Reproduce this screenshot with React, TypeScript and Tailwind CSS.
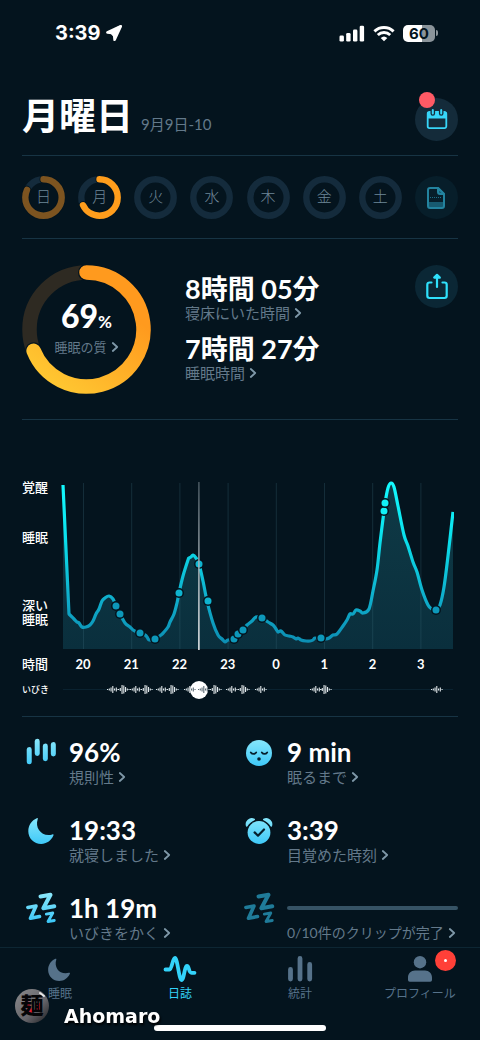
import React, { useState } from 'react';

type Point = [number, number];

const BG = '#04141e';

// Sleep depth over the night
const curve: Point[] = [
  [4, 5], [10, 134], [12, 136], [15, 139], [18, 142], [20, 143], [23, 147], [27, 147], [31, 145], [34, 141],
  [37, 134], [40, 129], [43, 121], [46, 118], [50, 116], [54, 119], [57, 126], [61, 134], [66, 143],
  [71, 147], [74, 150], [80, 153], [86, 155], [88, 157], [90, 160], [93, 160], [96, 159], [102, 155],
  [105, 152], [109, 147], [111, 142], [115, 134], [118, 123], [120, 113], [124, 96], [129, 80], [130, 78],
  [132, 77], [134, 75], [137, 78], [140, 84], [144, 101], [148, 121], [154, 143], [159, 155], [163, 159],
  [166, 162], [169, 160], [175, 159], [179, 153], [184, 150], [188, 145], [193, 141], [197, 137],
  [203, 138], [209, 142], [214, 145], [217, 149], [219, 152], [222, 151], [226, 155], [230, 156], [234, 157], [237, 159],
  [239, 158], [242, 160], [247, 161], [251, 161], [254, 160], [256, 158], [262, 159], [267, 159], [270, 158], [274, 155],
  [278, 154], [284, 146], [288, 140], [291, 134], [294, 134], [297, 130], [301, 131], [304, 133],
  [310, 129], [314, 111], [318, 90], [321, 63], [325, 31], [326, 23], [329, 8], [332, 3], [335, 7],
  [339, 26], [345, 55], [349, 66], [354, 82], [358, 92], [363, 110], [369, 125], [373, 129], [377, 130],
  [381, 125], [385, 107], [389, 76], [394, 32],
];

const dots: Point[] = [
  [57, 126], [61, 134], [81, 153], [96, 159], [120, 113], [140, 84], [149, 121],
  [175, 159], [179, 154], [184, 150], [203, 138], [262, 158], [325, 31], [326, 23], [377, 130],
];

const hours = ['20', '21', '22', '23', '0', '1', '2', '3'];

const smallBurst = [1, 2, 4, 7, 2, 4, 1];
const largeBurst = [1, 3, 9, 8, 5, 2, 1];
const snores: { x: number; bars: number[] }[] = [
  { x: 48, bars: smallBurst },
  { x: 59, bars: largeBurst },
  { x: 71, bars: smallBurst },
  { x: 82, bars: largeBurst },
  { x: 97, bars: smallBurst },
  { x: 108, bars: largeBurst },
  { x: 125, bars: smallBurst },
  { x: 139, bars: smallBurst },
  { x: 151, bars: largeBurst },
  { x: 167, bars: smallBurst },
  { x: 179, bars: largeBurst },
  { x: 196, bars: smallBurst },
  { x: 251, bars: smallBurst },
  { x: 261, bars: largeBurst },
  { x: 372, bars: smallBurst },
];

const days = [
  { label: '日', value: 82, color: '#7d5420' },
  { label: '月', value: 68, color: '#ff9d1c' },
  { label: '火', value: 0, color: '' },
  { label: '水', value: 0, color: '' },
  { label: '木', value: 0, color: '' },
  { label: '金', value: 0, color: '' },
  { label: '土', value: 0, color: '' },
];

function smoothPath(points: Point[]) {
  let d = `M${points[0][0]} ${points[0][1]}`;
  for (let i = 0; i < points.length - 1; i++) {
    const p0 = points[i - 1] ?? points[i];
    const p1 = points[i];
    const p2 = points[i + 1];
    const p3 = points[i + 2] ?? p2;
    // long straight drop at the start should not overshoot
    const k = i < 2 ? 0 : 1 / 6;
    d += `C${p1[0] + (p2[0] - p0[0]) * k} ${p1[1] + (p2[1] - p0[1]) * k} ${p2[0] - (p3[0] - p1[0]) * k} ${p2[1] - (p3[1] - p1[1]) * k} ${p2[0]} ${p2[1]}`;
  }
  return d;
}

function Chevron() {
  return (
    <svg viewBox="0 0 8 12" className="h-3 w-2 shrink-0" fill="none" stroke="#7f98a8" strokeWidth="1.8" strokeLinecap="round" strokeLinejoin="round">
      <path d="M1.8 2 6.2 6 1.8 10" />
    </svg>
  );
}

function LinkLabel({ children, className = 'text-[15px]' }: { children: React.ReactNode; className?: string }) {
  return (
    <button className={`flex items-center gap-1 whitespace-nowrap leading-[18px] text-[#63798a] ${className}`}>
      <span>{children}</span>
      <Chevron />
    </button>
  );
}

function StatusBar() {
  return (
    <div className="flex h-[66px] items-center justify-between pl-[55px] pr-[42px]">
      <div className="flex items-center gap-1 font-['Inter',sans-serif] text-[20px] font-bold">
        <span>3:39</span>
        <svg viewBox="0 0 18 18" className="size-[18px]" fill="#fff" stroke="#fff" strokeWidth="2.6" strokeLinejoin="round">
          <path d="M15.8 2.2 2.4 8.4 9 9.2 9.6 15.8Z" />
          <path d="M15 3 6 8.2 9.8 12.500Z" />
        </svg>
      </div>
      <div className="flex items-center gap-2">
        <svg viewBox="0 0 26 17" className="h-[17px] w-[26px]" fill="#fff">
          <rect x="0.5" y="10.5" width="4.4" height="6" rx="1.3" />
          <rect x="7.2" y="8" width="4.4" height="8.5" rx="1.3" />
          <rect x="14" y="4.6" width="4.4" height="11.9" rx="1.3" />
          <rect x="20.7" y="0.8" width="4.4" height="15.7" rx="1.3" />
        </svg>
        <svg viewBox="0 0 22 17" className="h-[17px] w-[22px]" fill="none" stroke="#fff" strokeWidth="2.9">
          <path d="M1.4 6.4a13.8 13.8 0 0 1 19.2 0" />
          <path d="M4.8 10a9 9 0 0 1 12.4 0" />
          <path d="M11 16.3 7.7 13a4.8 4.8 0 0 1 6.6 0Z" fill="#fff" stroke="none" />
        </svg>
        <div className="flex items-center">
          <div className="flex h-[17px] w-8 items-center justify-center rounded-[5px] bg-linear-to-r from-white from-60% to-[#8b949a] to-60% font-['Inter',sans-serif] text-[15px] leading-none font-bold text-[#04141e]">
            60
          </div>
          <div className="ml-px h-[6px] w-[2px] rounded-r-full bg-[#8b949a]" />
        </div>
      </div>
    </div>
  );
}

function DayRing({ label, value, color }: { label: string; value: number; color: string }) {
  return (
    <button className="grid size-[43px] place-items-center">
      <svg viewBox="0 0 43 43" className="col-start-1 row-start-1 size-full -rotate-90" fill="none">
        <circle cx="21.5" cy="21.5" r="18.2" stroke="#142b3c" strokeWidth="6.4" />
        {value > 0 && (
          <>
            <circle cx="21.5" cy="21.5" r="18.2" pathLength="100" stroke={BG} strokeWidth="8" strokeLinecap="round" strokeDasharray={`${value} 100`} />
            <circle cx="21.5" cy="21.5" r="18.2" pathLength="100" stroke={color} strokeWidth="6.4" strokeLinecap="round" strokeDasharray={`${value} 100`} />
          </>
        )}
      </svg>
      <span className="col-start-1 row-start-1 pb-1 text-[15px] leading-5 font-light text-[#6f8798]">{label}</span>
    </button>
  );
}

function ScoreRing() {
  return (
    <div className="grid size-[129px] shrink-0 place-items-center">
      <svg viewBox="0 0 129 129" className="col-start-1 row-start-1 size-full" fill="none">
        <defs>
          <linearGradient id="score" x1="100" y1="10" x2="20" y2="115" gradientUnits="userSpaceOnUse">
            <stop offset="0.2" stopColor="#ff9a1e" />
            <stop offset="1" stopColor="#ffc832" />
          </linearGradient>
        </defs>
        <circle cx="64.5" cy="64.5" r="57" stroke="#2e2a22" strokeWidth="14.5" />
        <path d="M64.5 7.5A57 57 0 1 1 11.6 85.8" stroke={BG} strokeWidth="17" strokeLinecap="round" />
        <path d="M64.5 7.5A57 57 0 1 1 11.6 85.8" stroke="url(#score)" strokeWidth="14.5" strokeLinecap="round" />
      </svg>
      <div className="col-start-1 row-start-1 flex flex-col items-center pb-1">
        <p className="text-[32px] leading-8 font-black">
          69<span className="text-[17px] font-bold">%</span>
        </p>
        <LinkLabel className="text-[13px]">睡眠の質</LinkLabel>
      </div>
    </div>
  );
}

function SleepChart() {
  const line = smoothPath(curve);
  return (
    <svg viewBox="0 0 395 170" className="w-full" role="img" fill="none">
      <defs>
        <linearGradient id="depth" x1="0" y1="0" x2="0" y2="165" gradientUnits="userSpaceOnUse">
          <stop offset="0" stopColor="#14fbff" />
          <stop offset="0.35" stopColor="#0ae0ec" />
          <stop offset="0.7" stopColor="#0fb0cd" />
          <stop offset="1" stopColor="#0c8db2" />
        </linearGradient>
        <linearGradient id="area" x1="0" y1="0" x2="0" y2="1">
          <stop offset="0" stopColor="#0f3a46" />
          <stop offset="1" stopColor="#0a2f3d" />
        </linearGradient>
        <linearGradient id="cursor" x1="0" y1="0" x2="0" y2="170" gradientUnits="userSpaceOnUse">
          <stop offset="0" stopColor="#4a5962" />
          <stop offset="0.5" stopColor="#a9b3b9" />
          <stop offset="1" stopColor="#ffffff" />
        </linearGradient>
      </defs>
      <path d={`${line}V169H4Z`} fill="url(#area)" />
      {hours.map((hour, i) => (
        <path key={hour} d={`M${24.5 + i * 48.2} 3V169`} stroke="#3c6a7c" strokeOpacity="0.3" />
      ))}
      <path d={line} stroke="url(#depth)" strokeWidth="3.2" strokeLinejoin="round" />
      {dots.map(([x, y]) => (
        <g key={`${x}-${y}`}>
          <circle cx={x} cy={y} r="5" fill={BG} />
          <circle cx={x} cy={y} r="3.5" fill={y < 40 ? '#12f0f6' : y < 125 ? '#0fb4cf' : '#0d98ba'} />
        </g>
      ))}
      <path d="M139.2 2h1.4V170h-1.4Z" fill="url(#cursor)" />
    </svg>
  );
}

function SnoreTrack() {
  const [position, setPosition] = useState(347);
  return (
    <div className="relative h-5">
      <input
        type="range"
        aria-label="いびき"
        min={0}
        max={1000}
        value={position}
        onChange={(e) => setPosition(Number(e.target.value))}
        className="absolute inset-0 h-5 w-full appearance-none bg-transparent [&::-webkit-slider-thumb]:size-[18px] [&::-webkit-slider-thumb]:appearance-none [&::-webkit-slider-thumb]:rounded-full [&::-webkit-slider-thumb]:bg-white"
      />
      <svg viewBox="0 0 395 20" className="pointer-events-none relative w-full" fill="none">
        <path d="M4 9.5H130M150 9.5H394" stroke="#0a2230" />
        {snores.map(({ x, bars }) =>
          bars.map((h, i) => {
            const bx = x + i * 1.75;
            const onThumb = bx > 131 && bx < 148;
            return <rect key={`${x}-${i}`} x={bx} y={9.5 - h / 2} width="1.1" height={h} fill={onThumb ? '#5b6a73' : '#e3e9ec'} />;
          }),
        )}
      </svg>
    </div>
  );
}

function IconGradient({ id }: { id: string }) {
  return (
    <defs>
      <linearGradient id={id} x1="0" y1="0" x2="0" y2="30" gradientUnits="userSpaceOnUse">
        <stop offset="0" stopColor="#8ee9fb" />
        <stop offset="1" stopColor="#3cc8f8" />
      </linearGradient>
    </defs>
  );
}

function RegularityIcon() {
  return (
    <svg viewBox="0 0 32 30" className="h-[30px] w-8" stroke="url(#bars)" strokeWidth="5" strokeLinecap="round">
      <IconGradient id="bars" />
      <path d="M3.2 12.5 3.25 24.8M11.2 4.2 11.25 16.5M19.3 9 19.35 21.7M27.3 7.5 27.35 17" />
    </svg>
  );
}

function FaceIcon() {
  return (
    <svg viewBox="0 0 30 30" className="size-[30px]" fill="none">
      <IconGradient id="face" />
      <circle cx="14" cy="16" r="13" fill="url(#face)" />
      <path d="M5.8 15.4c1.4 2 4 2 5.4 0M16.8 15.4c1.4 2 4 2 5.4 0" stroke="#06202d" strokeWidth="1.8" strokeLinecap="round" />
      <circle cx="14" cy="22" r="1.8" fill="#06202d" />
    </svg>
  );
}

function MoonIcon({ fill, className }: { fill: string; className: string }) {
  return (
    <svg viewBox="0 0 30 30" className={className} fill={fill}>
      <IconGradient id="moon" />
      <path d="M9.8 3.2c.8-.3 1.2.2.9 1C7.6 13.4 15 22.2 25.3 19.4c1-.2 1.5.3 1.1 1.2C24 26 19.5 28.9 14.2 28.9 7 28.9 1.3 23.3 1.3 16.200c0-6 3.400-11 8.500-13Z" />
    </svg>
  );
}

function AlarmIcon() {
  return (
    <svg viewBox="0 0 30 30" className="size-[30px]" fill="none">
      <IconGradient id="alarm" />
      <circle cx="14" cy="17.500" r="11.400" fill="url(#alarm)" />
      <path d="M1.800 11C.2 6.500 4.800 2.300 9.200 4.400 6 5.800 3.400 7.800 1.800 11ZM26.200 11C27.800 6.500 23.200 2.300 18.800 4.400 22 5.800 24.600 7.800 26.200 11Z" fill="url(#alarm)" stroke="url(#alarm)" strokeWidth="1.600" strokeLinejoin="round" />
      <path d="m9.600 17.400 3.400 3.300 6-6.200" stroke="#06202d" strokeWidth="2.200" strokeLinecap="round" strokeLinejoin="round" />
    </svg>
  );
}

function SnoreIcon({ stroke }: { stroke: string }) {
  return (
    <svg viewBox="0 0 32 32" className="size-8" fill="none" stroke={stroke} strokeLinecap="round" strokeLinejoin="round">
      <IconGradient id="snore" />
      <path d="M14.500 4.500 24.500 2.800 17.300 16.300 28.300 14.300" strokeWidth="4" />
      <path d="M1.900 15.500 10 14 4.500 26.300 13.500 24.500" strokeWidth="3.600" />
      <path d="M20.300 22.200 26.800 21 22 29.500 28.300 28.500" strokeWidth="2.800" />
    </svg>
  );
}

function Stat({ icon, value, label }: { icon: React.ReactNode; value: string; label: string }) {
  return (
    <div className="flex gap-2">
      <div className="flex h-[30px] w-[39px] shrink-0 items-center justify-center">{icon}</div>
      <div>
        <p className="mb-px text-[26px] leading-[30px] font-bold">{value}</p>
        <LinkLabel>{label}</LinkLabel>
      </div>
    </div>
  );
}

function Tab({ icon, label, className = 'text-[#56728a]' }: { icon: React.ReactNode; label: string; className?: string }) {
  return (
    <a href="#" className={`flex flex-1 flex-col items-center gap-1 text-xs ${className}`}>
      {icon}
      <span>{label}</span>
    </a>
  );
}

export default function App() {
  return (
    <div lang="ja" className="relative flex min-h-screen flex-col bg-[#04141e] font-['Lato','Noto_Sans_CJK_JP',sans-serif] text-white">
      <StatusBar />

      <main className="flex-1 px-[22px]">
        {/* Title */}
        <header className="flex justify-between border-b border-[#173444] pt-8 pb-[14px]">
          <div className="flex items-baseline gap-2">
            <h1 className="text-[37px] leading-9 font-bold">月曜日</h1>
            <span className="text-[15px] text-[#63798a]">9月9日-10</span>
          </div>
          <button aria-label="カレンダー" className="relative flex size-[43px] items-center justify-center rounded-full bg-[#142b3a]">
            <svg viewBox="0 0 22 22" className="size-[22px]" fill="none">
              <path d="M3.500 3H18.500a1.800 1.800 0 0 1 1.800 1.800V17.300a1.800 1.800 0 0 1-1.800 1.800H3.500a1.800 1.800 0 0 1-1.800-1.800V4.800a1.800 1.800 0 0 1 1.800-1.800Z" stroke="#37d5f8" strokeWidth="1.800" />
              <path d="M1.500 3H20.500V9.500H1.500Z" fill="#37d5f8" />
              <path d="M6.800 1V4.500M15.200 1V4.500" stroke="#142b3a" strokeWidth="4.600" strokeLinecap="round" />
              <path d="M6.800 1V4.500M15.200 1V4.500" stroke="#37d5f8" strokeWidth="2" strokeLinecap="round" />
            </svg>
            <span className="absolute -top-[6px] left-1 size-4 rounded-full bg-[#ff5a65]" />
          </button>
        </header>

        {/* Week */}
        <div className="flex justify-between border-b border-[#173444] pt-5 pb-[19px]">
          {days.map((day) => (
            <DayRing key={day.label} {...day} />
          ))}
          <button aria-label="メモ" className="flex size-[43px] items-center justify-center rounded-full bg-[#071e2a]">
            <svg viewBox="0 0 20 24" className="h-6 w-5" fill="none" stroke="#23839f" strokeWidth="2" strokeLinejoin="round">
              <path d="M2 16H18V21H2Z" fill="#175a70" stroke="none" />
              <path d="M4 2H12L18 8V20a2 2 0 0 1-2 2H4a2 2 0 0 1-2-2V4a2 2 0 0 1 2-2Z" />
              <path d="M12 2V6a2 2 0 0 0 2 2H18Z" fill="#175a70" />
              <path d="M4 11.500H16" strokeWidth="0.800" strokeDasharray="1 1" />
            </svg>
          </button>
        </div>

        {/* Sleep quality and durations */}
        <section className="flex items-center border-b border-[#173444] pt-[26px] pb-[25px]">
          <ScoreRing />
          <div className="ml-[34px] flex flex-1 flex-col gap-3 pb-1">
            <div>
              <p className="text-[27px] leading-[30px] font-bold">8時間 05分</p>
              <LinkLabel>寝床にいた時間</LinkLabel>
            </div>
            <div>
              <p className="text-[27px] leading-[30px] font-bold">7時間 27分</p>
              <LinkLabel>睡眠時間</LinkLabel>
            </div>
          </div>
          <button aria-label="共有" className="flex size-[43px] items-center justify-center self-start rounded-full bg-[#0b2735]">
            <svg viewBox="0 0 24 28" className="h-7 w-6" fill="none" stroke="#2fe0fb" strokeWidth="2.200" strokeLinecap="round" strokeLinejoin="round">
              <path d="M6.500 9.500H4.500A2.200 2.200 0 0 0 2.300 11.700V22.800A2.200 2.200 0 0 0 4.500 25H19.500A2.200 2.200 0 0 0 21.700 22.800V11.700A2.200 2.200 0 0 0 19.500 9.500H17.500" />
              <path d="M12 14V2.500M9.200 4.600 12 1.800 14.800 4.600Z" />
            </svg>
          </button>
        </section>

        {/* Chart */}
        <section className="border-b border-[#173444] pt-[60px] pb-4 text-[13px] font-medium">
          <div className="flex pr-1">
            <div className="flex w-[37px] shrink-0 flex-col whitespace-nowrap leading-[14px]">
              <span>覚醒</span>
              <span className="mt-9">睡眠</span>
              <span className="mt-[54px]">深い<br />睡眠</span>
            </div>
            <div className="flex-1">
              <SleepChart />
            </div>
          </div>
          <div className="flex h-[30px] items-center pr-[13px]">
            <span className="w-[37px] shrink-0">時間</span>
            {hours.map((hour) => (
              <span key={hour} className="flex-1 text-center font-bold">{hour}</span>
            ))}
          </div>
          <div className="flex items-center pr-1">
            <span className="w-[37px] shrink-0 text-[9px]">いびき</span>
            <div className="flex-1">
              <SnoreTrack />
            </div>
          </div>
        </section>

        {/* Stats */}
        <section className="grid grid-cols-2 gap-y-[29px] pt-5">
          <Stat icon={<RegularityIcon />} value="96%" label="規則性" />
          <Stat icon={<FaceIcon />} value="9 min" label="眠るまで" />
          <Stat icon={<MoonIcon fill="url(#moon)" className="size-[30px]" />} value="19:33" label="就寝しました" />
          <Stat icon={<AlarmIcon />} value="3:39" label="目覚めた時刻" />
          <Stat icon={<SnoreIcon stroke="url(#snore)" />} value="1h 19m" label="いびきをかく" />
          <div className="flex gap-2">
            <div className="flex h-[30px] w-[39px] shrink-0 items-center justify-center">
              <SnoreIcon stroke="#1f7b99" />
            </div>
            <div className="flex-1">
              <div className="mb-px flex h-[30px] items-center">
                <div className="h-1 w-full rounded-xs bg-[#365365]" />
              </div>
              <LinkLabel className="text-[14px]">0/10件のクリップが完了</LinkLabel>
            </div>
          </div>
        </section>
      </main>

      {/* Tab bar */}
      <nav className="sticky bottom-0 h-[93px] border-t border-[#0d2633] bg-[#04141e] pt-2">
        <div className="flex">
          <Tab icon={<MoonIcon fill="#56728a" className="size-[26px]" />} label="睡眠" />
          <Tab
            className="text-[#33d3fa]"
            label="日誌"
            icon={
              <svg viewBox="0 0 34 26" className="h-[26px] w-[34px]" fill="none" stroke="currentColor" strokeWidth="3.800" strokeLinecap="round" strokeLinejoin="round">
                <path d="M2.500 13.500H6.500C9 13.500 9.500 2 12 2S16 24 18.500 24 21.500 10 24 10C26.300 10 25.500 16.800 28.500 16.800H31.500" />
              </svg>
            }
          />
          <Tab
            label="統計"
            icon={
              <svg viewBox="0 0 26 26" className="size-[26px]" stroke="currentColor" strokeWidth="4.800" strokeLinecap="round">
                <path d="M3.500 13.500V23M13 2.500V23M22.700 8.500V23" />
              </svg>
            }
          />
          <Tab
            label="プロフィール"
            icon={
              <span className="relative">
                <svg viewBox="0 0 26 26" className="size-[26px]" fill="currentColor">
                  <circle cx="13" cy="6.200" r="6.200" />
                  <path d="M1 24V21.500C1 17.500 4 14.500 8 14.500H18C22 14.500 25 17.500 25 21.500V24a1.800 1.800 0 0 1-1.800 1.800H2.800A1.800 1.800 0 0 1 1 24Z" />
                </svg>
                <span className="absolute -top-[6px] left-7 flex size-[21px] items-center justify-center rounded-full bg-[#ff4038]">
                  <span className="size-[3px] rounded-full bg-white" />
                </span>
              </span>
            }
          />
        </div>
        <div className="absolute inset-x-0 bottom-[9px] mx-auto h-[6px] w-[172px] rounded-full bg-white" />

        {/* Account stamp */}
        <div className="absolute bottom-3 left-[14px] flex items-center gap-[14px]">
          <svg viewBox="0 0 36 36" className="size-9">
            <defs>
              <linearGradient id="stamp" x1="0" y1="0" x2="1" y2="1">
                <stop offset="0" stopColor="#8a8a8c" />
                <stop offset="0.6" stopColor="#66656a" />
                <stop offset="1" stopColor="#1c1c1f" />
              </linearGradient>
            </defs>
            <circle cx="18" cy="18" r="17" fill="url(#stamp)" />
            <path d="M13 14 17 25M24 15V23" stroke="#e01f33" strokeWidth="4" />
            <text x="18" y="26" textAnchor="middle" fontSize="23" className="font-['Noto_Sans_CJK_JP',sans-serif] font-black" fill="#050507">麺</text>
            <path d="M26 5 30 8" stroke="#e8e8e8" strokeWidth="2" strokeLinecap="round" />
          </svg>
          <span className="pt-5 font-['DejaVu_Sans',sans-serif] text-[19px] leading-6 font-bold drop-shadow-[1px_2px_1px_#000]">Ahomaro</span>
        </div>
      </nav>
    </div>
  );
}
